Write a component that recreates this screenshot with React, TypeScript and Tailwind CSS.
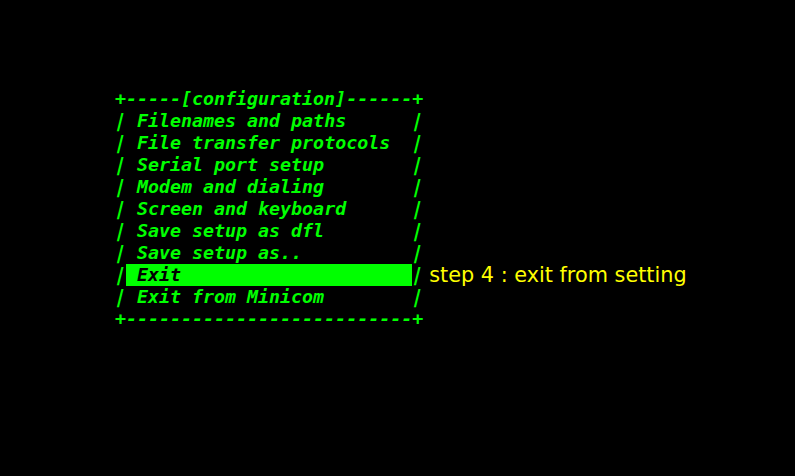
import React from "react";

const mono = { fontFamily: '"DejaVu Sans Mono", monospace' };

function Bar() {
  return <span className="inline-block -skew-x-[14deg]">|</span>;
}

function Row({ text }: { text: string }) {
  return (
    <div className="whitespace-pre h-[22px]">
      <Bar />
      {text}
      <Bar />
    </div>
  );
}

export default function App() {
  const rows = [
    " Filenames and paths      ",
    " File transfer protocols  ",
    " Serial port setup        ",
    " Modem and dialing        ",
    " Screen and keyboard      ",
    " Save setup as dfl        ",
    " Save setup as..          ",
  ];
  return (
    <div className="w-[795px] h-[476px] bg-black overflow-hidden pt-[88px] pl-[115px]">
      <div
        className="flex flex-col text-[18.3px] leading-[22px] font-bold italic text-[#00ff00]"
        style={mono}
      >
        <div className="whitespace-pre h-[22px]">+-----[configuration]------+</div>
        {rows.map((r, i) => (
          <Row key={i} text={r} />
        ))}
        <div className="flex items-center h-[22px]">
          <span className="whitespace-pre">
            <Bar />
          </span>
          <span className="whitespace-pre bg-[#00ff00] text-black h-[22px]">
            {" Exit                     "}
          </span>
          <span className="whitespace-pre">
            <Bar />
          </span>
          <span
            className="ml-[6px] text-[20.8px] font-normal not-italic text-[#ffff00]"
            style={{ fontFamily: '"DejaVu Sans", sans-serif' }}
          >
            step 4 : exit from setting
          </span>
        </div>
        <Row text=" Exit from Minicom        " />
        <div className="whitespace-pre h-[22px]">+--------------------------+</div>
      </div>
    </div>
  );
}
